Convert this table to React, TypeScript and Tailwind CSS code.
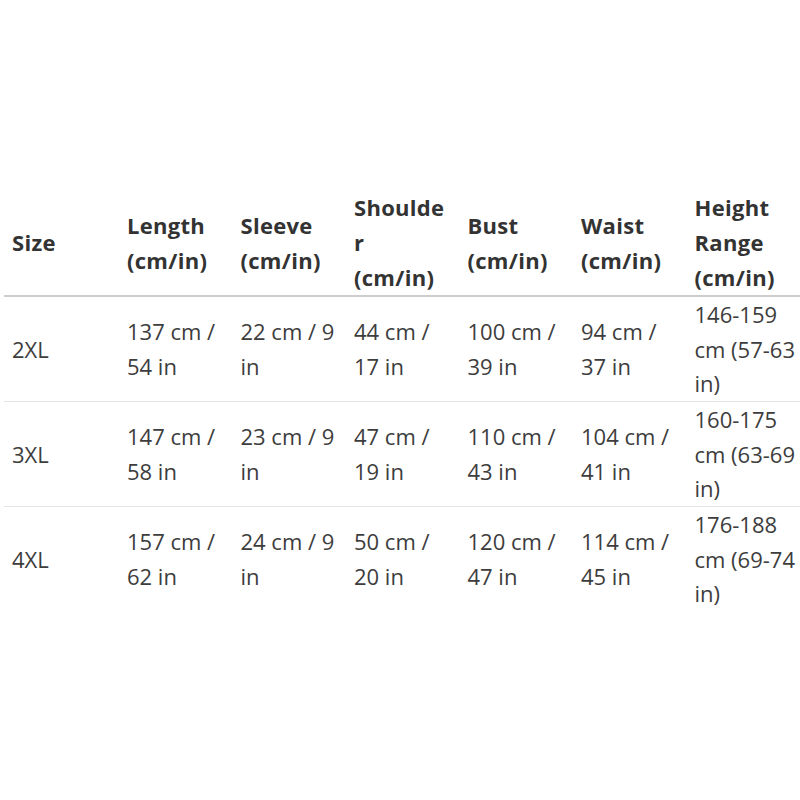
import React from 'react';

type Row = { size: string; cells: string[][] };

const headers: string[][] = [
  ['Size'],
  ['Length', '(cm/in)'],
  ['Sleeve', '(cm/in)'],
  ['Shoulde', 'r', '(cm/in)'],
  ['Bust', '(cm/in)'],
  ['Waist', '(cm/in)'],
  ['Height', 'Range', '(cm/in)'],
];

const rows: Row[] = [
  {
    size: '2XL',
    cells: [
      ['137 cm /', '54 in'],
      ['22 cm / 9', 'in'],
      ['44 cm /', '17 in'],
      ['100 cm /', '39 in'],
      ['94 cm /', '37 in'],
      ['146-159', 'cm (57-63', 'in)'],
    ],
  },
  {
    size: '3XL',
    cells: [
      ['147 cm /', '58 in'],
      ['23 cm / 9', 'in'],
      ['47 cm /', '19 in'],
      ['110 cm /', '43 in'],
      ['104 cm /', '41 in'],
      ['160-175', 'cm (63-69', 'in)'],
    ],
  },
  {
    size: '4XL',
    cells: [
      ['157 cm /', '62 in'],
      ['24 cm / 9', 'in'],
      ['50 cm /', '20 in'],
      ['120 cm /', '47 in'],
      ['114 cm /', '45 in'],
      ['176-188', 'cm (69-74', 'in)'],
    ],
  },
];

const Lines = ({ lines }: { lines: string[] }) => (
  <>
    {lines.map((l, i) => (
      <span key={i} className="block whitespace-nowrap">
        {l}
      </span>
    ))}
  </>
);

export default function App() {
  return (
    <div
      className="w-[800px] h-[800px] overflow-hidden bg-white pt-[190px] pl-[4px]"
      style={{ fontFamily: '"Open Sans", "Noto Sans", sans-serif' }}
    >
      <table className="table-fixed border-collapse w-[796px] text-[22px]">
        <colgroup>
          <col className="w-[115px]" />
          {headers.slice(1).map((_, i) => (
            <col key={i} className="w-[113.5px]" />
          ))}
        </colgroup>
        <thead>
          <tr className="border-b-2 border-[#cdcdcd]">
            {headers.map((h, i) => (
              <th
                key={i}
                className="text-left align-middle font-bold text-[#333] leading-[35px] tracking-[0.3px] pl-[8px] p-0"
              >
                <Lines lines={h} />
              </th>
            ))}
          </tr>
        </thead>
        <tbody>
          {rows.map((r, ri) => (
            <tr key={r.size} className={ri < rows.length - 1 ? 'border-b border-[#e4e4e4]' : ''}>
              <td className="align-middle text-[#3d3d3d] leading-[34.67px] pl-[8px] h-[104px]">{r.size}</td>
              {r.cells.map((c, i) => (
                <td key={i} className="align-middle text-[#3d3d3d] leading-[34.67px] pl-[8px]">
                  <Lines lines={c} />
                </td>
              ))}
            </tr>
          ))}
        </tbody>
      </table>
    </div>
  );
}
